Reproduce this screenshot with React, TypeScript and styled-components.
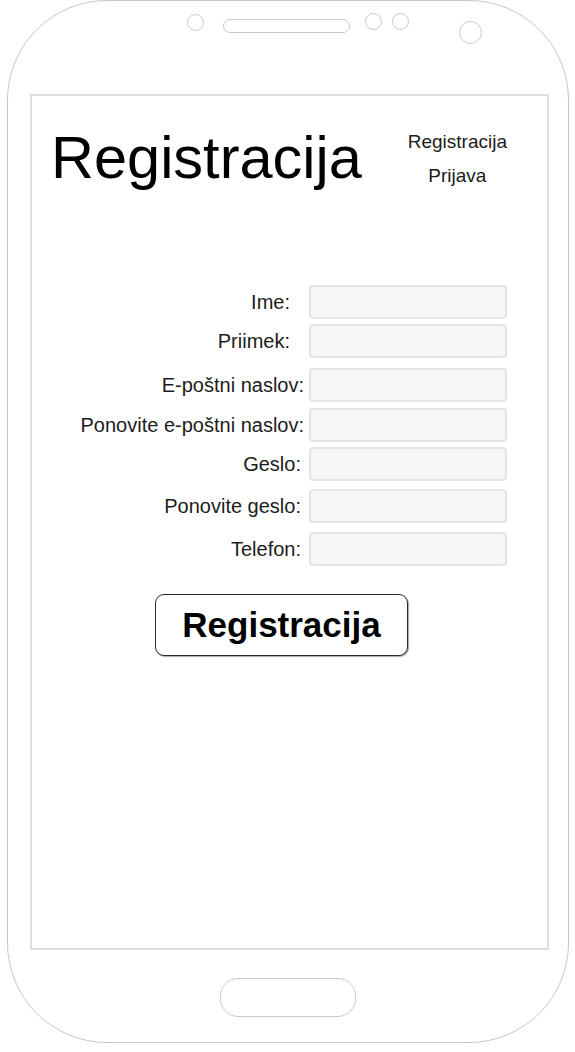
import React from "react";
import styled, { createGlobalStyle } from "styled-components";

const Global = createGlobalStyle`
  html, body { margin: 0; padding: 0; background: #ffffff; }
  body { font-family: "Liberation Sans", Arial, sans-serif; color: #1c1c1c; }
  * { box-sizing: border-box; }
`;

const Phone = styled.div`
  margin-left: 7px;
  width: 562px;
  height: 1043px;
  border: 1px solid #c6c6c6;
  border-radius: 100px;
  display: flex;
  flex-direction: column;
  align-items: flex-start;
`;

const SensorBar = styled.div`
  height: 93px;
  display: flex;
  align-items: flex-start;
  padding-left: 179px;
`;

const Dot = styled.div<{ $size: number; $top: number; $gap: number }>`
  width: ${(p) => p.$size}px;
  height: ${(p) => p.$size}px;
  margin-top: ${(p) => p.$top}px;
  margin-left: ${(p) => p.$gap}px;
  border: 1px solid #c9c9c9;
  border-radius: 50%;
  flex: none;
`;

const Speaker = styled.div`
  width: 127px;
  height: 14px;
  margin-top: 18px;
  margin-left: 19px;
  border: 1px solid #c9c9c9;
  border-radius: 7px;
  flex: none;
`;

const Screen = styled.div`
  margin-left: 22px;
  width: 519px;
  height: 856px;
  border: 2px solid #dedede;
  display: flex;
  flex-direction: column;
`;

const Header = styled.div`
  display: flex;
  justify-content: space-between;
  align-items: flex-start;
  padding: 0 40px 0 19px;
`;

const Title = styled.h1`
  margin: 32px 0 0 0;
  font-family: "Liberation Sans", Arial, sans-serif;
  font-weight: 400;
  font-size: 59.5px;
  line-height: 1;
  color: #000;
`;

const Nav = styled.nav`
  margin-top: 29px;
  display: flex;
  flex-direction: column;
  align-items: center;
`;

const NavLink = styled.a`
  font-size: 19px;
  line-height: 34px;
  color: #1c1c1c;
  text-decoration: none;
`;

const Form = styled.form`
  margin-top: 92px;
  display: flex;
  flex-direction: column;
`;

const Row = styled.div<{ $gap: number }>`
  display: grid;
  grid-template-columns: 277px 198px;
  align-items: center;
  margin-top: ${(p) => p.$gap}px;
`;

const Label = styled.label<{ $pad: number }>`
  text-align: right;
  padding-right: ${(p) => p.$pad}px;
  font-size: 20px;
  color: #1c1c1c;
  white-space: nowrap;
`;

const Input = styled.input`
  width: 198px;
  height: 34px;
  background: #f5f6f8;
  border: 2px solid #e4e5e8;
  border-radius: 4px;
  outline: none;
`;

const SubmitButton = styled.button`
  margin: 28px 0 0 123px;
  width: 253px;
  height: 62px;
  background: #fff;
  border: 1px solid #2a2a2a;
  border-radius: 9px;
  box-shadow: 1px 1px 1px rgba(0, 0, 0, 0.35);
  font-family: "Liberation Sans", Arial, sans-serif;
  font-weight: 700;
  font-size: 35px;
  color: #000;
  cursor: pointer;
`;

const HomeButton = styled.div`
  margin: 28px 0 0 212px;
  width: 136px;
  height: 39px;
  border: 1px solid #cacaca;
  border-radius: 18px;
`;

const fields: { label: string; pad: number; gap: number; type?: string }[] = [
  { label: "Ime:", pad: 19, gap: 0 },
  { label: "Priimek:", pad: 19, gap: 5 },
  { label: "E-poštni naslov:", pad: 5, gap: 10, type: "email" },
  { label: "Ponovite e-poštni naslov:", pad: 5, gap: 6, type: "email" },
  { label: "Geslo:", pad: 8, gap: 5, type: "password" },
  { label: "Ponovite geslo:", pad: 8, gap: 8, type: "password" },
  { label: "Telefon:", pad: 8, gap: 9, type: "tel" },
];

export default function App() {
  return (
    <>
      <Global />
      <Phone>
        <SensorBar>
          <Dot $size={17} $top={13} $gap={0} />
          <Speaker />
          <Dot $size={17} $top={12} $gap={15} />
          <Dot $size={17} $top={12} $gap={10} />
          <Dot $size={23} $top={20} $gap={50} />
        </SensorBar>
        <Screen>
          <Header>
            <Title>Registracija</Title>
            <Nav>
              <NavLink href="#">Registracija</NavLink>
              <NavLink href="#">Prijava</NavLink>
            </Nav>
          </Header>
          <Form onSubmit={(e) => e.preventDefault()}>
            {fields.map((f, i) => (
              <Row key={i} $gap={f.gap}>
                <Label $pad={f.pad} htmlFor={`f${i}`}>
                  {f.label}
                </Label>
                <Input id={`f${i}`} type={f.type || "text"} />
              </Row>
            ))}
          </Form>
          <div>
            <SubmitButton type="submit">Registracija</SubmitButton>
          </div>
        </Screen>
        <HomeButton />
      </Phone>
    </>
  );
}
